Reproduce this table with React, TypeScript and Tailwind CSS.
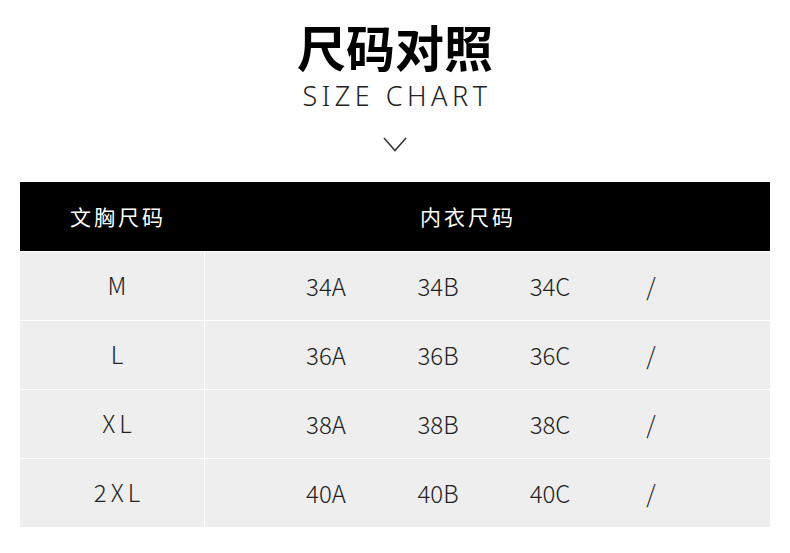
const rows = [
  { size: 'M', cups: ['34A', '34B', '34C', '/'] },
  { size: 'L', cups: ['36A', '36B', '36C', '/'] },
  { size: 'XL', cups: ['38A', '38B', '38C', '/'] },
  { size: '2XL', cups: ['40A', '40B', '40C', '/'] },
];

// width of each cup column, left to right
const cupWidths = ['w-[112px]', 'w-[112px]', 'w-[112px]', 'w-[90px]'];

export default function App() {
  return (
    <div className="w-[790px] h-[553px] bg-white overflow-hidden font-['Noto_Sans_CJK_SC','Noto_Sans',sans-serif]">
      {/* Title */}
      <div className="flex flex-col items-center pt-[21px]">
        <h1 className="text-[49px] leading-[49px] font-bold text-black">尺码对照</h1>
        <p className="mt-[12px] text-[27px] leading-[27px] font-light tracking-[4.5px] pl-[4px] text-[#222] font-['Noto_Sans',sans-serif]">
          SIZE CHART
        </p>
        <svg width="24" height="15" viewBox="0 0 24 15" className="mt-[28px]" fill="none">
          <path d="M1 1 L12 13.5 L23 1" stroke="#333" strokeWidth="1.5" />
        </svg>
      </div>

      {/* Table */}
      <div className="mx-[20px] mt-[30px] flex flex-col gap-px">
        <div className="flex h-[69px] items-center bg-black text-white text-[21px] tracking-[3px]">
          <div className="w-[184px] pl-[12px] text-center">文胸尺码</div>
          <div className="ml-[164px] w-[200px] text-center">内衣尺码</div>
        </div>
        {rows.map((r) => (
          <div key={r.size} className="flex h-[68px] gap-px">
            <div className="w-[184px] flex items-center justify-center bg-[#eeeeee] text-[24px] font-light text-[#222] tracking-[4px] pl-[14px] pb-[2px]">
              {r.size}
            </div>
            <div className="flex-1 flex items-center bg-[#eeeeee] text-[24px] font-light text-[#222]">
              <div className="w-[65px]" />
              {r.cups.map((c, i) => (
                <div key={i} className={`${cupWidths[i]} text-center`}>
                  {c}
                </div>
              ))}
            </div>
          </div>
        ))}
      </div>
    </div>
  );
}
